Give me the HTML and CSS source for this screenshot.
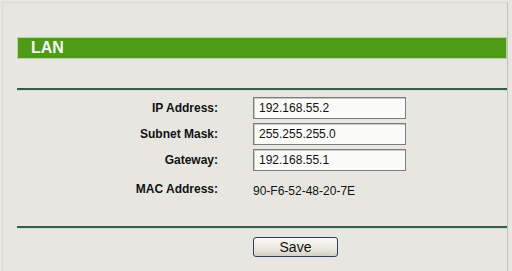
FILE: index.html
```html
<!DOCTYPE html>
<html lang="en">
<head>
  <meta charset="UTF-8">
  <title>LAN</title>
  <link rel="stylesheet" href="styles.css">
</head>
<body>

  <div class="frame">
    <div class="title">LAN</div>

    <div class="rule"></div>

    <div class="form">
      <label>IP Address:</label>
      <input type="text" value="192.168.55.2">

      <label>Subnet Mask:</label>
      <input type="text" value="255.255.255.0">

      <label>Gateway:</label>
      <input type="text" value="192.168.55.1">

      <label>MAC Address:</label>
      <span class="mac">90-F6-52-48-20-7E</span>
    </div>

    <div class="rule bottom"></div>

    <div class="actions">
      <button>Save</button>
    </div>
  </div>

</body>
</html>
```

FILE: styles.css
```css
body {
  font-family: "Liberation Sans", Arial, sans-serif;
  background: #e8e6e1;
  margin: 0;
  padding: 0;
  color: #111;
}

.frame {
  margin: 2px 0 0 2px;
  width: 506px;
  height: 269px;
  box-sizing: border-box;
  padding: 34px 0 0 14px;
  border-top: 1px solid #dcd9d4;
  border-left: 1px solid #dcd9d4;
  border-right: 1px solid #c3c0ba;
}

.title {
  height: 22px;
  box-sizing: border-box;
  background: #4f9b18;
  border: 1px solid #b3d898;
  color: #f4f9ef;
  font-weight: bold;
  font-size: 16px;
  line-height: 20px;
  padding-left: 13px;
}

.rule {
  margin-top: 29px;
  height: 2px;
  background: #365c4a;
  box-shadow: 0 1px 0 #c9e2c6;
}

.rule.bottom {
  margin-top: 23px;
}

.form {
  display: grid;
  grid-template-columns: 201px 153px;
  column-gap: 35px;
  row-gap: 4px;
  margin-top: 7px;
  align-items: center;
}

.form label {
  text-align: right;
  font-weight: bold;
  font-size: 12px;
}

.form input {
  height: 22px;
  box-sizing: border-box;
  border: 1px solid #7c7c7c;
  box-shadow: inset 1px 1px 0 #c8c8c8;
  background: #fbfbf9;
  font-family: "Liberation Sans", Arial, sans-serif;
  font-size: 12px;
  padding: 0 0 0 5px;
  margin: 0;
  color: #111;
}

.mac {
  font-size: 12px;
  line-height: 24px;
  margin-top: 4px;
}

.actions {
  padding: 9px 0 0 236px;
}

button {
  width: 85px;
  height: 20px;
  padding: 0;
  border: 1px solid #2e4058;
  border-radius: 3px;
  background: linear-gradient(#faf9f5, #e6e3da 70%, #d3cfc4);
  font-family: "Liberation Sans", Arial, sans-serif;
  font-size: 14px;
  color: #111;
  cursor: pointer;
}
```
